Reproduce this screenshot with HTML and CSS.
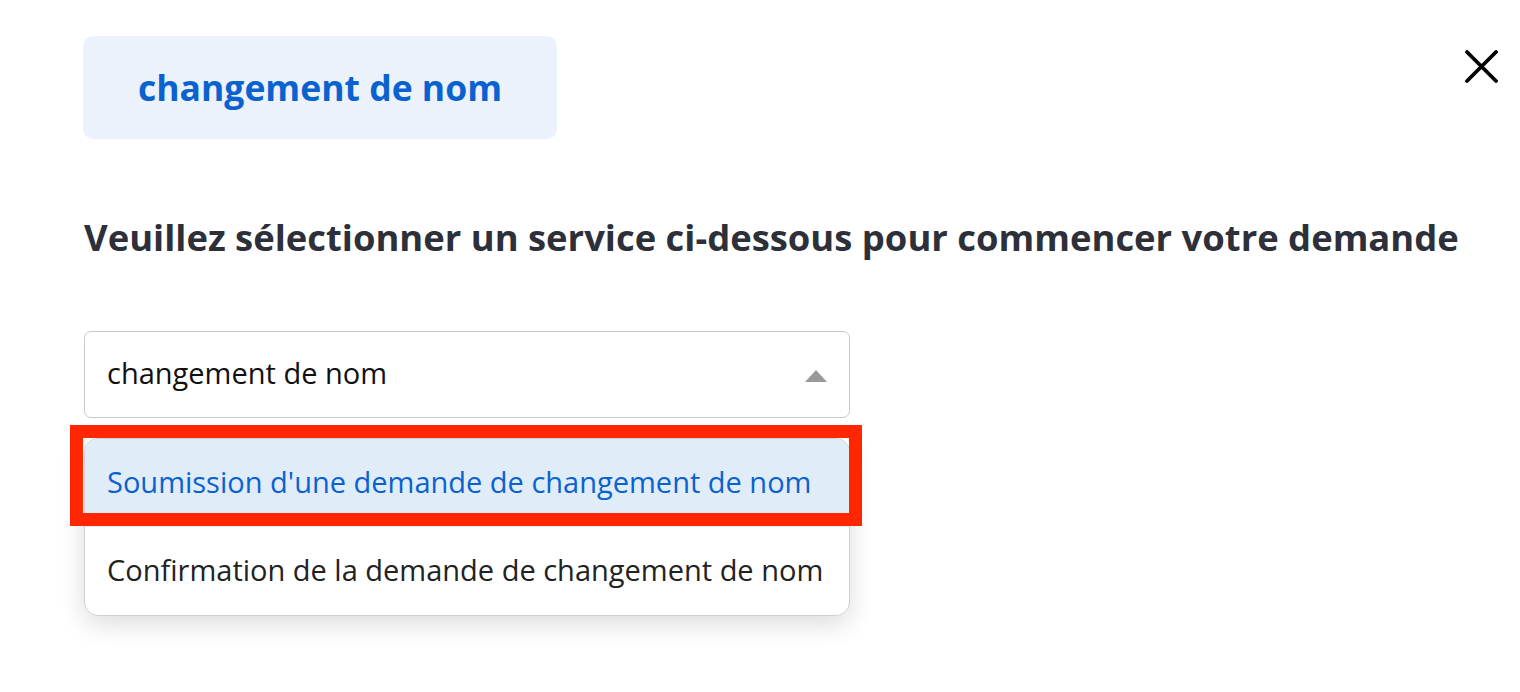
FILE: index.html
```html
<!DOCTYPE html>
<html lang="fr">
<head>
<meta charset="utf-8">
<link rel="stylesheet" href="styles.css">
</head>
<body>
<div class="page">
  <div class="top">
    <div class="tag">changement de nom</div>
    <button class="close" aria-label="Fermer">
      <svg width="34" height="34" viewBox="0 0 34 34"><path d="M3 2 L32 31 M32 2 L3 31" stroke="#000" stroke-width="3.8" stroke-linecap="round"/></svg>
    </button>
  </div>
  <h2 class="title">Veuillez sélectionner un service ci-dessous pour commencer votre demande</h2>
  <div class="select-wrap">
    <div class="select">
      <span class="value">changement de nom</span>
      <span class="caret"></span>
    </div>
    <ul class="menu">
      <li class="opt active">Soumission d'une demande de changement de nom</li>
      <li class="opt">Confirmation de la demande de changement de nom</li>
    </ul>
    <div class="highlight"></div>
  </div>
</div>
</body>
</html>
```
FILE: styles.css
```css
html, body { margin: 0; padding: 0; background: #fff; }
body { font-family: "Open Sans", "Noto Sans", sans-serif; color: #2d3039; min-height: 692px; }
.page { padding: 36px 22px 70px 84px; }
.top { display: flex; justify-content: space-between; align-items: flex-start; }
.tag {
  margin-left: -1px;
  width: 474px; height: 103px; box-sizing: border-box;
  background: #ebf2fc; border-radius: 10px;
  display: flex; align-items: center; justify-content: center;
  color: #0a62cf; font-weight: 700; font-size: 35.5px;
  padding-bottom: 2px;
}
.close { background: none; border: 0; padding: 0; margin-top: 14px; width: 34px; height: 34px; cursor: pointer; }
.title { margin: 78px 0 0; font-size: 36.4px; font-weight: 700; color: #2d3039; line-height: 40px; }
.select-wrap { position: relative; width: 766px; margin-top: 74px; }
.select {
  height: 87px; box-sizing: border-box;
  border: 1.5px solid #c9c9c9; border-radius: 7px;
  display: flex; align-items: center; justify-content: space-between;
  padding: 0 22px 0 22px;
  font-size: 29px; color: #111;
}
.value { margin-top: -4px; }
.caret { width: 0; height: 0; border-left: 11px solid transparent; border-right: 11px solid transparent; border-bottom: 12px solid #9a9a9a; margin-top: 2px; }
.menu {
  list-style: none; margin: 20px 0 0; padding: 0;
  border: 1px solid #cfcfcf; border-radius: 14px; overflow: hidden;
  box-shadow: 0 8px 26px rgba(0,0,0,0.14);
}
.opt { height: 88px; display: flex; align-items: center; padding: 0 22px 4px; box-sizing: border-box; font-size: 29px; color: #222; }
.opt.active { background: #e0ecf8; color: #0a62cf; }
.highlight {
  position: absolute; left: -14px; top: 94px; width: 792px; height: 101px; box-sizing: border-box;
  border: 13px solid #ff2600;
}
```
